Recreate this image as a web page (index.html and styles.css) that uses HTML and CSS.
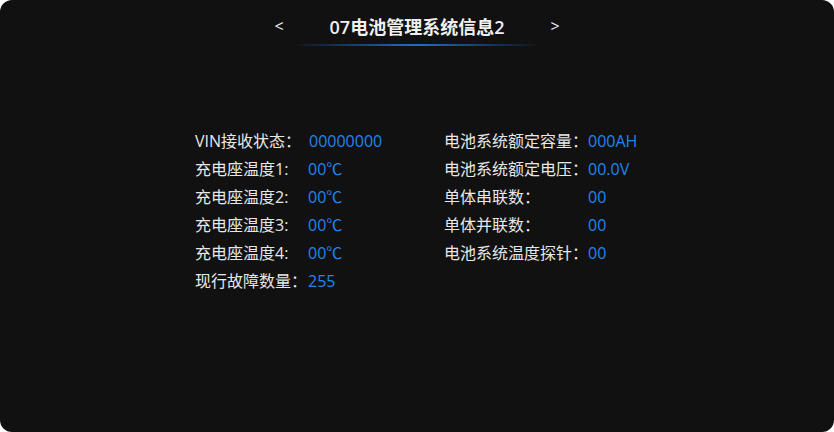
FILE: index.html
```html
<!DOCTYPE html>
<html lang="zh">
<head>
<meta charset="utf-8">
<link rel="stylesheet" href="styles.css">
</head>
<body>
<div class="panel">
  <div class="header">
    <span class="arrow">&lt;</span>
    <div class="title">07电池管理系统信息2</div>
    <span class="arrow">&gt;</span>
  </div>
  <div class="line"></div>
  <div class="content">
    <div class="col col-left">
      <div class="row"><span class="label">VIN接收状态：</span><span class="value v1">00000000</span></div>
      <div class="row"><span class="label">充电座温度1:</span><span class="value">00℃</span></div>
      <div class="row"><span class="label">充电座温度2:</span><span class="value">00℃</span></div>
      <div class="row"><span class="label">充电座温度3:</span><span class="value">00℃</span></div>
      <div class="row"><span class="label">充电座温度4:</span><span class="value">00℃</span></div>
      <div class="row"><span class="label">现行故障数量：</span><span class="value">255</span></div>
    </div>
    <div class="col col-right">
      <div class="row"><span class="label">电池系统额定容量：</span><span class="value">000AH</span></div>
      <div class="row"><span class="label">电池系统额定电压：</span><span class="value">00.0V</span></div>
      <div class="row"><span class="label">单体串联数：</span><span class="value">00</span></div>
      <div class="row"><span class="label">单体并联数：</span><span class="value">00</span></div>
      <div class="row"><span class="label">电池系统温度探针：</span><span class="value">00</span></div>
    </div>
  </div>
</div>
</body>
</html>
```

FILE: styles.css
```css
html, body {
  margin: 0;
  padding: 0;
  background: #ffffff;
}
body {
  width: 834px;
  height: 432px;
  font-family: "Open Sans", "Noto Sans CJK SC", sans-serif;
}
.panel {
  width: 834px;
  height: 432px;
  background: #111111;
  border-radius: 12px;
  box-sizing: border-box;
  padding-top: 12px;
  overflow: hidden;
}
.header {
  display: flex;
  justify-content: center;
  align-items: center;
  height: 28px;
  color: #f0f0f0;
}
.arrow {
  font-size: 16px;
  width: 20px;
  text-align: center;
}
.title {
  width: 256px;
  text-align: center;
  font-size: 18px;
  font-weight: 600;
}
.line {
  width: 250px;
  height: 2px;
  margin: 4px auto 0;
  background: linear-gradient(90deg, rgba(20,110,220,0) 0%, rgba(30,120,230,0.9) 50%, rgba(20,110,220,0) 100%);
}
.content {
  display: flex;
  padding-left: 195px;
  padding-top: 81px;
}
.col {
  display: flex;
  flex-direction: column;
}
.col-left {
  width: 249px;
}
.row {
  display: flex;
  height: 28px;
  align-items: center;
  font-size: 16px;
  line-height: 28px;
}
.label {
  color: #e8e8e8;
}
.col-left .label { width: 113px; }
.col-right .label { width: 144px; }
.value {
  color: #1f86f0;
}
.v1 { margin-left: 1px; }
```
